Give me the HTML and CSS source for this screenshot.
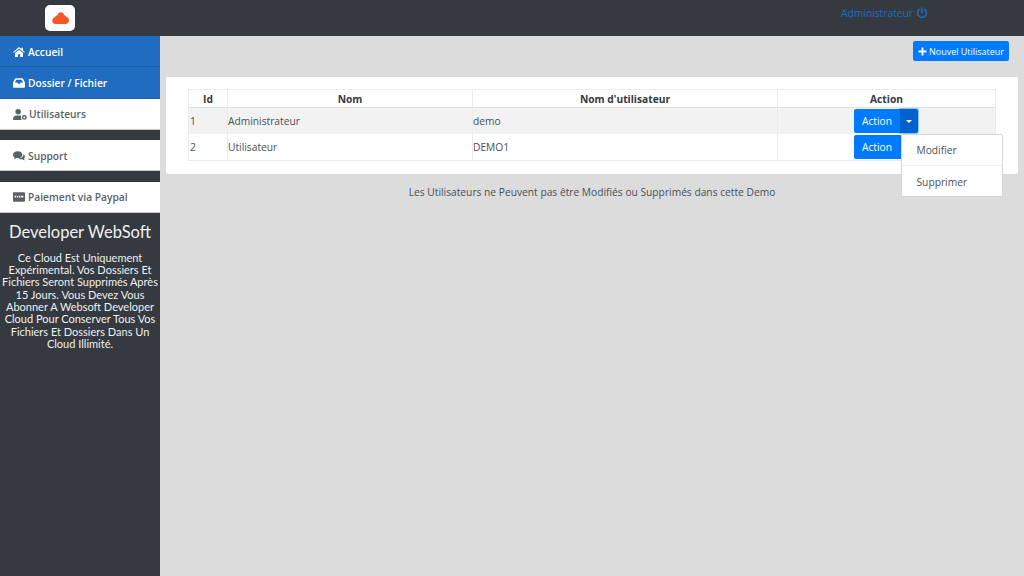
FILE: index.html
```html
<!DOCTYPE html>
<html lang="fr">
<head>
    <meta charset="UTF-8">
    <title>Utilisateurs</title>
    <link rel="stylesheet" href="styles.css">
</head>
<body>
    <header class="topbar">
        <div class="brand">
            <svg class="brand-cloud" viewBox="0 0 17 12"><path d="M3.600 12A3.400 3.400 0 0 1 2.900 5.300 3 3 0 0 1 5.500 3.200C6 1.300 7 .2 8.800.2c2 0 3.100 1.300 3.400 3 .8-.2 1.600.4 1.900 1.500A3.700 3.700 0 0 1 13.300 12z"/></svg>
        </div>
        <a class="user-link">Administrateur
            <svg class="power" viewBox="0 0 12 12"><path d="M3.400 2.400a4.400 4.400 0 1 0 5.200 0" /><path d="M6 1v4.600" /></svg>
        </a>
    </header>
    <div class="layout">
        <aside class="sidebar">
            <nav class="menu">
                <a class="menu-item active">
                    <svg class="ico" viewBox="0 0 14 12"><path d="M7 0l2.800 2.400V1h2v3.100L14 6l-.8.900L7 1.700.8 6.900 0 6z"/><path d="M2.200 7.300L7 3.200l4.800 4.100V12H8.300V8.600H5.700V12H2.200z"/></svg>
                    Accueil</a>
                <a class="menu-item active">
                    <svg class="ico" viewBox="0 0 14 11"><path d="M3.500 0h7c.6 0 1.100.3 1.400.8L14 5v4.500c0 .8-.7 1.500-1.500 1.500h-11C.7 11 0 10.300 0 9.500V5L2.100.8C2.400.3 2.900 0 3.500 0zm.2 1.600L2.200 5h2.900l.8 1.500h2.200L8.900 5h2.900l-1.500-3.400z" fill-rule="evenodd"/></svg>
                    Dossier / Fichier</a>
                <a class="menu-item">
                    <svg class="ico ico-wide" viewBox="0 0 15 12"><circle cx="5.500" cy="3" r="3"/><path d="M0 12v-1.500C0 8.500 1.500 7 3.500 7h4c.5 0 1 .1 1.400.3-.5 1.400-.4 3.200.6 4.700z"/><circle cx="12.300" cy="9.200" r="1.900" fill="none" stroke="currentColor" stroke-width="1.500"/></svg>
                    Utilisateurs</a>
                <a class="menu-item spaced">
                    <svg class="ico" viewBox="0 0 14 11"><path d="M5.500 0C8.500 0 11 1.800 11 4s-2.500 4-5.500 4c-.6 0-1.100-.1-1.600-.2C3.100 8.500 2 9 .9 9.200c.5-.6.900-1.300 1-2C.8 6.400 0 5.300 0 4 0 1.800 2.500 0 5.500 0z"/><path d="M12.300 3.400c1 .7 1.700 1.700 1.700 2.800 0 .9-.4 1.700-1.100 2.300.1.800.5 1.500 1 2-1.100-.1-2.100-.6-2.900-1.200-.4.100-.8.100-1.200.1-1.300 0-2.500-.4-3.300-1.100 3.500-.2 6-2.300 5.800-4.900z"/></svg>
                    Support</a>
                <a class="menu-item spaced">
                    <svg class="ico" viewBox="0 0 14 11"><path d="M1 0h12c.6 0 1 .4 1 1v9c0 .6-.4 1-1 1H1c-.6 0-1-.4-1-1V1c0-.6.4-1 1-1zm1 4v2h1.500V4zm2.500 0v2H6V4zM7 4v2h1.500V4zm2.500 0v2H12V4z" fill-rule="evenodd"/></svg>
                    Paiement via Paypal</a>
            </nav>
            <div class="promo">
                <h2>Developer WebSoft</h2>
                <p>Ce Cloud Est Uniquement Expérimental. Vos Dossiers Et Fichiers Seront Supprimés Après 15 Jours. Vous Devez Vous Abonner A Websoft Developer Cloud Pour Conserver Tous Vos Fichiers Et Dossiers Dans Un Cloud Illimité.</p>
            </div>
        </aside>
        <main class="content">
            <div class="toolbar">
                <button class="btn btn-new">
                    <svg class="plus" viewBox="0 0 10 10"><path d="M5 .5v9M.5 5h9"/></svg>
                    Nouvel Utilisateur</button>
            </div>
            <section class="card">
                <table class="users">
                    <thead>
                        <tr><th class="col-id">Id</th><th class="col-nom">Nom</th><th class="col-login">Nom d'utilisateur</th><th>Action</th></tr>
                    </thead>
                    <tbody>
                        <tr class="odd">
                            <td>1</td><td>Administrateur</td><td>demo</td>
                            <td class="cell-action">
                                <div class="btn-group open">
                                    <button class="btn btn-action">Action</button>
                                    <button class="btn btn-caret"><span class="caret"></span></button>
                                    <div class="dropdown">
                                        <a>Modifier</a>
                                        <hr>
                                        <a>Supprimer</a>
                                    </div>
                                </div>
                            </td>
                        </tr>
                        <tr>
                            <td>2</td><td>Utilisateur</td><td>DEMO1</td>
                            <td class="cell-action">
                                <div class="btn-group">
                                    <button class="btn btn-action">Action</button>
                                    <button class="btn btn-caret"><span class="caret"></span></button>
                                </div>
                            </td>
                        </tr>
                    </tbody>
                </table>
            </section>
            <p class="note">Les Utilisateurs ne Peuvent pas être Modifiés ou Supprimés dans cette Demo</p>
        </main>
    </div>
</body>
</html>
```
FILE: styles.css
```css
* {
    box-sizing: border-box;
}

body {
    margin: 0;
    height: 576px;
    overflow: hidden;
    font-family: 'Open Sans', sans-serif;
    font-size: 10.240px;
    color: #495057;
    background-color: #dcdcdc;
}

.topbar {
    height: 36px;
    background-color: #343a40;
    display: flex;
    justify-content: space-between;
}

.brand {
    width: 30px;
    height: 26px;
    margin: 5px 0 0 45px;
    background-color: white;
    border-radius: 5px;
    display: flex;
    align-items: center;
    justify-content: center;
}

.brand-cloud {
    width: 17px;
    height: 12px;
    fill: #f9562a;
}

.user-link {
    height: 26px;
    margin-right: 96px;
    color: #1f6cc0;
    display: flex;
    align-items: center;
    gap: 3px;
}

.power {
    width: 12px;
    height: 12px;
    fill: none;
    stroke: #1f6cc0;
    stroke-width: 1.500;
    stroke-linecap: round;
}

.layout {
    display: flex;
    height: 540px;
}

.sidebar {
    width: 160px;
    background-color: #343a40;
}

.menu-item {
    height: 31.300px;
    padding: 1px 0 0 13px;
    display: flex;
    align-items: center;
    gap: 3px;
    background-color: white;
    color: #5a6268;
    font-weight: 600;
    border-bottom: 1px solid #c8c8c8;
}

.menu-item.active {
    background-color: #1f6cc0;
    color: white;
    border-bottom-color: #1b5fa9;
}

.menu-item.spaced {
    margin-top: 10.200px;
}

.ico {
    width: 12px;
    height: 10px;
    fill: currentColor;
}

.ico-wide {
    width: 14px;
    height: 11px;
    margin-right: -1px;
}

.promo {
    color: #f0f0f0;
    text-align: center;
    font-family: 'Lato', sans-serif;
    padding: 0 1px;
}

.promo h2 {
    margin: 9px 0 10px;
    font-size: 16.500px;
    line-height: 20px;
    font-weight: 400;
}

.promo p {
    margin: 0;
    font-size: 11px;
    line-height: 12.300px;
}

.content {
    flex: 1;
    padding: 5px 6px 0;
}

.toolbar {
    display: flex;
    justify-content: flex-end;
    padding-right: 9px;
}

.btn {
    border: none;
    border-radius: 2px;
    background-color: #007bff;
    color: white;
    font-family: 'Open Sans', sans-serif;
}

.btn-new {
    height: 20px;
    width: 96px;
    padding: 0;
    font-size: 8.960px;
    display: flex;
    align-items: center;
    justify-content: center;
    gap: 2px;
}

.plus {
    width: 9px;
    height: 9px;
    fill: none;
    stroke: white;
    stroke-width: 2;
}

.card {
    margin-top: 16px;
    height: 97px;
    padding: 12px 22px;
    background-color: white;
    border-radius: 2px;
}

.users {
    width: 808px;
    table-layout: fixed;
    border-collapse: collapse;
    border: 1px solid #e9ecef;
}

.users th {
    height: 18px;
    padding: 0;
    font-weight: 700;
    color: #343a40;
    text-align: center;
    border: 1px solid #e9ecef;
    border-bottom-color: #dee2e6;
}

.users td {
    height: 26.500px;
    padding: 0;
    border-left: 1px solid #e9ecef;
}

.users td:first-child {
    padding-left: 1px;
}

.col-id {
    width: 39px;
}

.col-nom {
    width: 245px;
}

.col-login {
    width: 305px;
}

.odd {
    background-color: #f2f2f2;
}

.cell-action {
    text-align: center;
}

.btn-group {
    display: inline-flex;
    position: relative;
    vertical-align: middle;
    margin-left: -1px;
}

.btn-action {
    width: 46px;
    height: 24px;
    padding: 0;
    font-size: 10.240px;
    border-radius: 2px 0 0 2px;
}

.btn-caret {
    width: 18px;
    height: 24px;
    padding: 0;
    border-radius: 0 2px 2px 0;
    display: flex;
    align-items: center;
    justify-content: center;
}

.open {
    z-index: 2;
}

.open .btn-caret {
    background-color: #0062cc;
    box-shadow: 0 0 0 1px rgba(0, 123, 255, 0.4);
}

.caret {
    border-top: 3px solid white;
    border-left: 3px solid transparent;
    border-right: 3px solid transparent;
}

.dropdown {
    position: absolute;
    top: 25px;
    left: 46.500px;
    width: 102px;
    height: 63px;
    background-color: white;
    border: 1px solid #d5d5d5;
    border-radius: 2px;
    text-align: left;
    color: #495057;
}

.dropdown a {
    display: block;
    height: 30px;
    line-height: 30px;
    padding-left: 15px;
}

.dropdown hr {
    margin: 0 0 1px;
    border: none;
    border-top: 1px solid #f0f0f0;
}

.note {
    margin: 11px 0 0;
    text-align: center;
}
```
